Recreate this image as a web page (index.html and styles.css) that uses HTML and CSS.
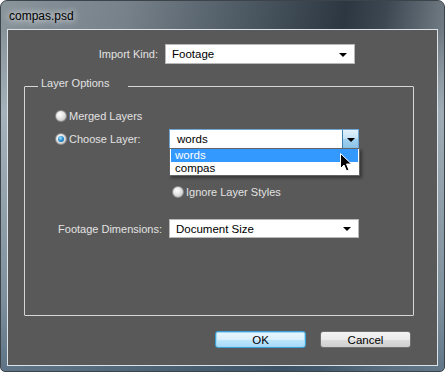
FILE: index.html
```html
<!DOCTYPE html>
<html lang="en">
<head>
    <meta charset="utf-8">
    <title>compas.psd</title>
    <link rel="stylesheet" href="styles.css">
</head>
<body>
    <div class="window">
        <div class="titlebar">
            <span class="title">compas.psd</span>
        </div>
        <div class="client">
            <div class="import-row">
                <span class="field-label import-label">Import Kind:</span>
                <div class="select">
                    <span class="select-value">Footage</span>
                    <span class="arrow"></span>
                </div>
            </div>

            <fieldset class="group">
                <legend>Layer Options</legend>

                <div class="option merged">
                    <span class="radio"></span>Merged Layers
                </div>

                <div class="option choose">
                    <div class="choose-label">
                        <span class="radio checked"></span>Choose Layer:
                    </div>
                    <div class="combo">
                        <span class="combo-value">words</span>
                        <span class="combo-btn"><span class="arrow"></span></span>
                        <ul class="popup">
                            <li class="active">words</li>
                            <li>compas</li>
                        </ul>
                        <svg class="cursor" width="12" height="19" viewBox="0 0 12 19">
                            <path d="M0.5 0.5 L0.5 15.5 L4 12 L6.5 18 L9 17 L6.5 11 L11.5 11 Z" fill="#000" stroke="#fff" stroke-width="1"/>
                        </svg>
                    </div>
                </div>

                <div class="option ignore">
                    <span class="radio"></span>Ignore Layer Styles
                </div>

                <div class="footage-row">
                    <span class="field-label footage-label">Footage Dimensions:</span>
                    <div class="select">
                        <span class="select-value">Document Size</span>
                        <span class="arrow"></span>
                    </div>
                </div>
            </fieldset>

            <div class="buttons">
                <button class="btn default">OK</button>
                <button class="btn">Cancel</button>
            </div>
        </div>
    </div>
</body>
</html>
```

FILE: styles.css
```css
* {
    margin: 0;
    padding: 0;
    box-sizing: border-box;
}

body {
    background-color: #ffffff;
    font-family: 'Liberation Sans', Arial, sans-serif;
    font-size: 11px;
}

.window {
    width: 445px;
    height: 372px;
    border: 1px solid #3d4449;
    border-radius: 7px 7px 5px 5px;
    padding: 0 6px 5px 6px;
    display: flex;
    flex-direction: column;
    background:
        linear-gradient(180deg, rgba(255, 255, 255, 0) 0%, rgba(255, 255, 255, 0) 8%, rgba(190, 205, 215, 0.55) 30%, rgba(120, 150, 170, 0.4) 80%, rgba(70, 100, 125, 0.6) 100%),
        linear-gradient(100deg, #8a949b 0%, #76818a 25%, #4a5660 50%, #2c3742 68%, #3c4752 76%, #79838b 90%, #89939a 100%);
    overflow: hidden;
}

.titlebar {
    height: 28px;
    display: flex;
    align-items: center;
    padding: 2px 0 0 2px;
}

.title {
    font-size: 12px;
    color: #000000;
    text-shadow: 0 0 6px rgba(255, 255, 255, 0.9), 0 0 10px rgba(255, 255, 255, 0.6);
}

.client {
    flex: 1;
    background-color: #595959;
    border: 1px solid #dbe3e8;
    display: flex;
    flex-direction: column;
    color: #e2e2e2;
}

.import-row {
    display: flex;
    align-items: center;
    margin-top: 14px;
    height: 20px;
}

.field-label {
    text-align: right;
    margin-right: 7px;
}

.import-label {
    width: 150px;
}

.select {
    width: 190px;
    height: 20px;
    background-color: #ffffff;
    border: 1px solid #b8b8b8;
    color: #000000;
    font-size: 11.5px;
    display: flex;
    align-items: center;
    justify-content: space-between;
    padding: 0 7px 0 6px;
}

.arrow {
    width: 0;
    height: 0;
    border-left: 4px solid transparent;
    border-right: 4px solid transparent;
    border-top: 4px solid #000000;
    margin-top: 1px;
}

.group {
    margin: 13px 23px 0 16px;
    height: 239px;
    border: 1px solid #d6d6d6;
    border-radius: 1px;
    padding: 12px 0 0 0;
    display: flex;
    flex-direction: column;
}

.group legend {
    margin-left: 13px;
    padding: 0 19px 6px 3px;
    line-height: 13px;
    color: #e2e2e2;
}

.option {
    display: flex;
    align-items: center;
}

.radio {
    width: 12px;
    height: 12px;
    border-radius: 50%;
    border: 1px solid #8a8a8a;
    background: radial-gradient(circle at 40% 35%, #ffffff 0%, #e4e4e4 45%, #b4b4b4 100%);
    margin-right: 2px;
    display: flex;
    align-items: center;
    justify-content: center;
}

.radio.checked::after {
    content: '';
    width: 6px;
    height: 6px;
    border-radius: 50%;
    background: radial-gradient(circle at 40% 35%, #9fe0ff 0%, #2a8fd0 50%, #0b4f86 100%);
}

.merged {
    height: 16px;
    margin-left: 30px;
}

.choose {
    height: 20px;
    margin-top: 5px;
    margin-left: 30px;
}

.choose-label {
    width: 114px;
    display: flex;
    align-items: center;
}

.combo {
    position: relative;
    width: 190px;
    height: 20px;
    background-color: #ffffff;
    border: 1px solid #6ea6d6;
    color: #000000;
    font-size: 11.5px;
    display: flex;
    align-items: center;
    justify-content: space-between;
}

.combo-value {
    padding-left: 7px;
}

.combo-btn {
    width: 16px;
    height: 18px;
    border-left: 1px solid #3c7fb1;
    background: linear-gradient(180deg, #e3f2fb 0%, #c2e2f7 50%, #a1d0ef 51%, #8cc3e8 100%);
    display: flex;
    align-items: center;
    justify-content: center;
}

.popup {
    position: absolute;
    top: 18px;
    left: -1px;
    width: 191px;
    list-style: none;
    background-color: #ffffff;
    border: 1px solid #646464;
    padding: 0 1px;
    box-shadow: 2px 2px 3px rgba(0, 0, 0, 0.4);
    z-index: 2;
}

.popup li {
    height: 13px;
    line-height: 13px;
    padding-left: 4px;
    color: #000000;
}

.popup li.active {
    background-color: #3399ff;
    color: #ffffff;
}

.cursor {
    position: absolute;
    left: 170px;
    top: 23px;
    z-index: 3;
}

.ignore {
    height: 16px;
    margin-top: 35px;
    margin-left: 147px;
}

.footage-row {
    display: flex;
    align-items: center;
    margin-top: 19px;
}

.footage-row .select {
    height: 19px;
}

.footage-label {
    width: 137px;
}

.buttons {
    display: flex;
    justify-content: flex-end;
    gap: 14px;
    margin-top: 15px;
    padding-right: 26px;
}

.btn {
    width: 91px;
    height: 17px;
    font-family: 'Liberation Sans', Arial, sans-serif;
    font-size: 11.5px;
    color: #000000;
    border: 1px solid #707070;
    border-radius: 3px;
    background: linear-gradient(180deg, #f4f4f4 0%, #ebebeb 50%, #dddddd 51%, #cfcfcf 100%);
}

.btn.default {
    border-color: #3c9fd8;
    box-shadow: inset 0 0 0 1px #9fd8f6;
    background: linear-gradient(180deg, #eaf6fd 0%, #d9f0fc 50%, #bee6fd 51%, #a7d9f5 100%);
}
```
